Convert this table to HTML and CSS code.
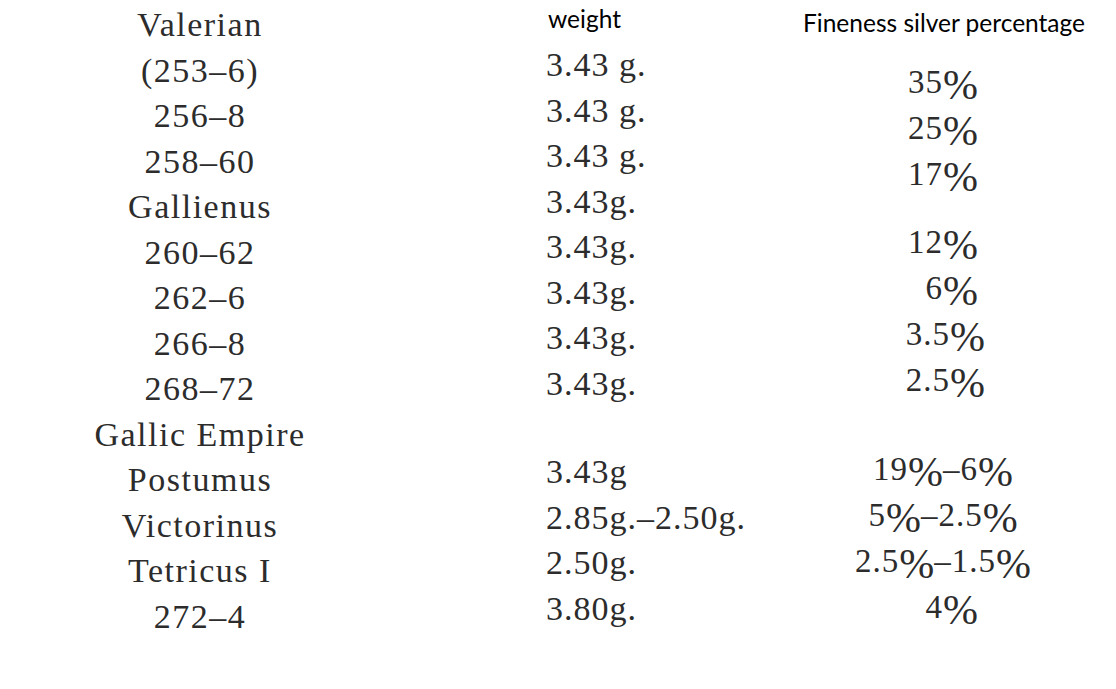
FILE: index.html
```html
<!DOCTYPE html>
<html lang="en">
<head>
<meta charset="utf-8">
<title>Antoninianus weight and fineness</title>
<link rel="stylesheet" href="styles.css">
</head>
<body>
<main class="table">
  <section class="col col-ruler">
    <div class="cell">Valerian</div>
    <div class="cell">(253–6)</div>
    <div class="cell">256–8</div>
    <div class="cell">258–60</div>
    <div class="cell">Gallienus</div>
    <div class="cell">260–62</div>
    <div class="cell">262–6</div>
    <div class="cell">266–8</div>
    <div class="cell">268–72</div>
    <div class="cell">Gallic Empire</div>
    <div class="cell">Postumus</div>
    <div class="cell">Victorinus</div>
    <div class="cell">Tetricus I</div>
    <div class="cell">272–4</div>
  </section>
  <section class="col col-weight">
    <div class="head head-weight">weight</div>
    <div class="cell">3.43 g.</div>
    <div class="cell">3.43 g.</div>
    <div class="cell">3.43 g.</div>
    <div class="cell">3.43g.</div>
    <div class="cell">3.43g.</div>
    <div class="cell">3.43g.</div>
    <div class="cell">3.43g.</div>
    <div class="cell">3.43g.</div>
    <div class="gap gap-weight"></div>
    <div class="cell">3.43g</div>
    <div class="cell">2.85g.–2.50g.</div>
    <div class="cell">2.50g.</div>
    <div class="cell">3.80g.</div>
  </section>
  <section class="col col-fine">
    <div class="head head-fine">Fineness silver percentage</div>
    <div class="vals">
      <div class="cell single">35<span class="pct">%</span></div>
      <div class="cell single">25<span class="pct">%</span></div>
      <div class="cell single">17<span class="pct">%</span></div>
      <div class="gap gap-small"></div>
      <div class="cell single">12<span class="pct">%</span></div>
      <div class="cell single">6<span class="pct">%</span></div>
      <div class="cell single wide">3.5<span class="pct">%</span></div>
      <div class="cell single wide">2.5<span class="pct">%</span></div>
      <div class="gap gap-large"></div>
      <div class="cell">19<span class="pct">%</span>–6<span class="pct">%</span></div>
      <div class="cell">5<span class="pct">%</span>–2.5<span class="pct">%</span></div>
      <div class="cell">2.5<span class="pct">%</span>–1.5<span class="pct">%</span></div>
      <div class="cell single">4<span class="pct">%</span></div>
    </div>
  </section>
</main>
</body>
</html>
```
FILE: styles.css
```css
html, body {
  margin: 0;
  padding: 0;
  background: #ffffff;
}

body {
  width: 1116px;
  height: 689px;
  overflow: hidden;
  font-family: "Liberation Serif", "Times New Roman", serif;
  color: #2c2c2c;
}

.table {
  display: grid;
  grid-template-columns: 400px 400px 316px;
}

.col {
  display: flex;
  flex-direction: column;
}

.cell {
  white-space: nowrap;
}

/* Column 1: rulers and dates */
.col-ruler {
  padding-top: 2px;
  text-align: center;
  font-size: 34px;
  line-height: 45.5px;
  letter-spacing: 1.5px;
}

/* Headers */
.head {
  font-family: Lato, "Open Sans", sans-serif;
  font-size: 24.5px;
  line-height: 1.2;
  color: #000000;
  box-sizing: border-box;
  letter-spacing: 0;
}

.head-weight {
  height: 42px;
  padding-top: 4px;
  padding-left: 2px;
}

.head-fine {
  height: 59px;
  padding-top: 8px;
  padding-left: 3px;
}

/* Column 2: weight */
.col-weight {
  padding-left: 146px;
  font-size: 34px;
  line-height: 45.5px;
  letter-spacing: 1px;
}

.gap-weight {
  height: 43px;
}

/* Column 3: fineness */
.vals {
  margin-left: 40px;
  width: 206px;
  text-align: center;
  font-size: 33px;
  line-height: 46px;
  letter-spacing: 1px;
}

.single {
  text-align: right;
  padding-right: 68px;
}

.single.wide {
  padding-right: 61px;
}

.gap-small {
  height: 22px;
}

.gap-large {
  height: 43px;
}

.pct {
  font-size: 42px;
  line-height: 0;
  vertical-align: -6px;
  letter-spacing: 0;
}
```
